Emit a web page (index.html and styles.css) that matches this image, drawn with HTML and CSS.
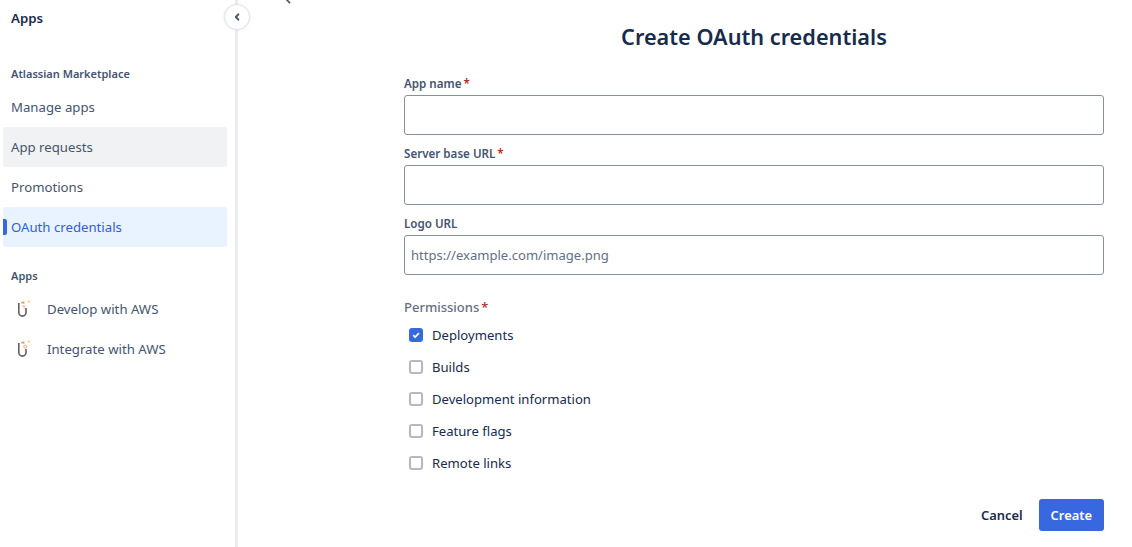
FILE: index.html
```html
<!DOCTYPE html>
<html lang="en">
<head>
<meta charset="utf-8">
<title>Create OAuth credentials</title>
<link rel="stylesheet" href="styles.css">
</head>
<body>
<div class="page">
  <aside class="sidebar">
    <div class="side-title">Apps</div>
    <div class="group-title first">Atlassian Marketplace</div>
    <nav class="nav">
      <a class="nav-item">Manage apps</a>
      <a class="nav-item hover">App requests</a>
      <a class="nav-item">Promotions</a>
      <a class="nav-item active">OAuth credentials</a>
    </nav>
    <div class="group-title second">Apps</div>
    <nav class="nav">
      <a class="nav-item app">
        <svg class="app-icon" viewBox="0 0 16 20" width="16" height="20"><path d="M2.8 4V13.5a3.6 3.6 0 0 0 7.2 0V9" fill="none" stroke="#5f6269" stroke-width="1.6"/><path d="M5.5 3.6h3" stroke="#f18d3c" stroke-width="1.8"/><path d="M6.2 7h3.4M7.4 9h1.6" stroke="#f6a868" stroke-width="1.1"/><circle cx="12.8" cy="2.6" r="1" fill="#f6b482"/></svg>
        <span>Develop with AWS</span>
      </a>
      <a class="nav-item app">
        <svg class="app-icon" viewBox="0 0 16 20" width="16" height="20"><path d="M2.8 4V13.5a3.6 3.6 0 0 0 7.2 0V10" fill="none" stroke="#5f6269" stroke-width="1.6"/><path d="M5.5 3.6h3" stroke="#f18d3c" stroke-width="1.8"/><circle cx="9.2" cy="7.6" r="1.5" fill="none" stroke="#f6a868" stroke-width="1"/><circle cx="12.8" cy="2.6" r="1" fill="#f6b482"/></svg>
        <span>Integrate with AWS</span>
      </a>
    </nav>
  </aside>
  <button class="collapse" type="button" aria-label="Collapse">
    <svg viewBox="0 0 10 10" width="10" height="10"><path d="M6.4 2.3 3.8 5l2.6 2.7" fill="none" stroke="#44546f" stroke-width="1.9" stroke-linecap="round" stroke-linejoin="round"/></svg>
  </button>
  <svg class="cut-icon" viewBox="0 0 10 6" width="10" height="6"><path d="M1.5 -.5 5 3.2" fill="none" stroke="#44546f" stroke-width="1.7"/></svg>
  <main class="main">
    <form class="form">
      <h1 class="heading">Create OAuth credentials</h1>
      <div class="field">
        <label class="label">App name<span class="req">*</span></label>
        <div class="input"></div>
      </div>
      <div class="field">
        <label class="label">Server base URL<span class="req">*</span></label>
        <div class="input"></div>
      </div>
      <div class="field">
        <label class="label">Logo URL</label>
        <div class="input placeholder">https://example.com/image.png</div>
      </div>
      <div class="perm-title">Permissions<span class="req">*</span></div>
      <div class="checks">
        <div class="check"><span class="box on"><svg viewBox="0 0 12 12" width="12" height="12"><path d="M2.6 6.2 5 8.5 9.5 3.7" fill="none" stroke="#fff" stroke-width="2"/></svg></span>Deployments</div>
        <div class="check"><span class="box"></span>Builds</div>
        <div class="check"><span class="box"></span>Development information</div>
        <div class="check"><span class="box"></span>Feature flags</div>
        <div class="check"><span class="box"></span>Remote links</div>
      </div>
      <div class="actions">
        <button class="btn ghost" type="button">Cancel</button>
        <button class="btn primary" type="button">Create</button>
      </div>
    </form>
  </main>
</div>
</body>
</html>
```
FILE: styles.css
```css
* { box-sizing: border-box; }
html, body { margin: 0; height: 100%; overflow: hidden; background: #fff; }
body { font-family: "Noto Sans", "Open Sans", sans-serif; font-size: 14px; color: #172b4d; }
.page { display: flex; height: 547px; position: relative; }
.sidebar { width: 238px; flex: none; border-right: 3px solid #ebecf0; padding: 0 8px 0 3px; }
.side-title { font-size: 13.3px; font-weight: 600; color: #172b4d; line-height: 20px; padding: 8px 0 0 8px; }
.group-title { font-size: 11px; font-weight: 600; color: #44546f; line-height: 16px; padding-left: 8px; }
.group-title.first { margin-top: 38px; }
.group-title.second { margin-top: 21px; }
.nav { display: flex; flex-direction: column; margin-top: 5px; }
.nav-item { height: 40px; display: flex; align-items: center; padding-left: 8px; color: #44546f; border-radius: 3px; position: relative; font-size: 13.2px; }
.nav-item.hover { background: #f1f2f4; }
.nav-item.active { background: #e9f2ff; color: #2f5fd8; }
.nav-item.active::before { content: ""; position: absolute; left: 0; top: 12px; width: 4px; height: 16px; background: #3868e0; border-radius: 0 2px 2px 0; }
.nav-item.app { padding-left: 13px; gap: 15px; }
.app-icon { flex: none; }
.collapse { position: absolute; left: 224px; top: 4px; width: 26px; height: 26px; padding: 0; border: 1px solid #e4e6ea; border-radius: 50%; background: #fff; display: flex; align-items: center; justify-content: center; box-shadow: 0 0 2px rgba(9,30,66,.12); }
.cut-icon { position: absolute; left: 285px; top: 0; }
.main { flex: 1; padding-left: 166px; padding-right: 28px; }
.form { width: 700px; }
.heading { margin: 0; text-align: center; font-size: 21.7px; font-weight: 600; color: #172b4d; line-height: 32px; padding-top: 21px; }
.field { display: flex; flex-direction: column; }
.field:nth-of-type(1) { margin-top: 22px; }
.field + .field { margin-top: 10px; }
.label { font-size: 11.6px; font-weight: 600; color: #44546f; line-height: 16px; height: 20px; padding-top: 1px; }
.req { color: #ae2e24; margin-left: 2px; }
.input { height: 40px; border: 1px solid #8590a2; border-radius: 3px; display: flex; align-items: center; padding-left: 6px; }
.placeholder { color: #626f86; font-size: 13.05px; }
.perm-title { margin-top: 22px; font-weight: 500; font-size: 13px; color: #626f86; line-height: 20px; }
.checks { display: flex; flex-direction: column; margin-top: 2px; }
.check { height: 32px; display: flex; align-items: center; font-size: 13.1px; color: #172b4d; padding-left: 5px; gap: 9px; }
.box { width: 14px; height: 14px; border: 2px solid #b3b9c4; border-radius: 3px; background: #fff; display: flex; align-items: center; justify-content: center; flex: none; }
.box.on { background: #3868e0; border-color: #3868e0; }
.actions { display: flex; justify-content: flex-end; align-items: center; gap: 4px; margin-top: 20px; }
.btn { height: 32px; border: 0; border-radius: 3px; font: 600 12.9px "Noto Sans", "Open Sans", sans-serif; padding: 0 12px; }
.ghost { background: transparent; color: #172b4d; }
.primary { background: #3868e0; color: #fff; }
```
